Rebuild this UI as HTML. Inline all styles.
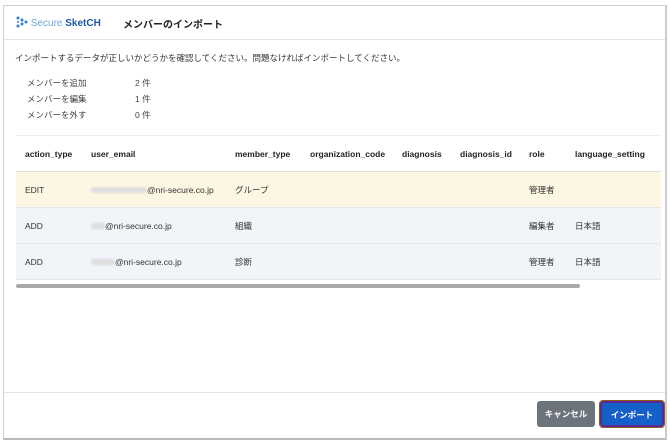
<!DOCTYPE html>
<html><head><meta charset="utf-8"><style>
*{box-sizing:border-box;margin:0;padding:0}
body{width:670px;height:446px;background:#fff;font-family:"Liberation Sans","Noto Sans CJK JP",sans-serif;color:#333;position:relative;overflow:hidden}
.frame{position:absolute;left:3px;top:5px;width:664px;height:435px;border:1px solid #cfcfcf;border-bottom:2px solid #bbb;border-right:2px solid #ccc}
.hdr{position:absolute;left:0;top:0;width:100%;height:34px;border-bottom:1px solid #e2e2e2}
.logo{position:absolute;left:12px;top:10px;font-size:10px;font-weight:bold}
.title{position:absolute;left:119px;top:10px;font-size:10px;font-weight:bold;color:#222}
.msg{position:absolute;left:11px;top:46px;font-size:8.5px;color:#333}
.sum{position:absolute;left:23px;font-size:8.5px;color:#444}
.sum span{position:absolute;left:108px;white-space:nowrap}
table{position:absolute;left:12px;top:129px;width:645px;border-collapse:collapse;font-size:8.5px}
th{text-align:left;height:36px;font-weight:bold;color:#222;border-top:1px solid #eee;border-bottom:1px solid #ddd;padding-left:9px}
td{height:36px;padding-left:9px;border-bottom:1px solid #e3e6ea;color:#333}
tr.y td{background:#fdf6e3}
tr.b td{background:#f1f4f8}
.blur{display:inline-block;height:6px;background:#ddd;border-radius:3px;vertical-align:middle;filter:blur(1px)}
.sb{position:absolute;left:12px;top:278px;width:564px;height:4px;background:#aaa;border-radius:2px}
.ft{position:absolute;left:0;top:386px;width:100%;border-top:1px solid #e2e2e2}
.btn{position:absolute;top:401px;height:26px;font-size:8.5px;font-weight:bold;color:#fff;text-align:center;line-height:24px;border-radius:3px}
</style></head><body>
<div class="frame">
<div class="hdr">
<div class="logo"><svg width="12" height="12" viewBox="0 0 12 12" style="vertical-align:-2px"><g fill="#2f7fd0"><circle cx="2" cy="2" r="1.5"/><circle cx="6" cy="4" r="1.5"/><circle cx="10" cy="6" r="1.5"/><circle cx="6" cy="8" r="1.5"/><circle cx="2" cy="10" r="1.5"/><circle cx="2" cy="6" r="1"/></g></svg> <span style="color:#6aa6df;font-weight:normal">Secure</span> <span style="color:#1d5aa6">SketCH</span></div>
<div class="title">メンバーのインポート</div>
</div>
<div class="msg">インポートするデータが正しいかどうかを確認してください。問題なければインポートしてください。</div>
<div class="sum" style="top:71px">メンバーを追加<span>2 件</span></div>
<div class="sum" style="top:87px">メンバーを編集<span>1 件</span></div>
<div class="sum" style="top:103px">メンバーを外す<span>0 件</span></div>
<table>
<tr><th style="width:66px">action_type</th><th style="width:144px">user_email</th><th style="width:75px">member_type</th><th style="width:92px">organization_code</th><th style="width:58px">diagnosis</th><th style="width:69px">diagnosis_id</th><th style="width:46px">role</th><th>language_setting</th></tr>
<tr class="y"><td>EDIT</td><td><span class="blur" style="width:56px"></span>@nri-secure.co.jp</td><td>グループ</td><td></td><td></td><td></td><td>管理者</td><td></td></tr>
<tr class="b"><td>ADD</td><td><span class="blur" style="width:14px"></span>@nri-secure.co.jp</td><td>組織</td><td></td><td></td><td></td><td>編集者</td><td>日本語</td></tr>
<tr class="b"><td>ADD</td><td><span class="blur" style="width:24px"></span>@nri-secure.co.jp</td><td>診断</td><td></td><td></td><td></td><td>管理者</td><td>日本語</td></tr>
</table>
<div class="sb"></div>
<div class="ft"></div>
</div>
<div class="btn" style="left:537px;width:58px;background:#6c737d;line-height:26px">キャンセル</div>
<div class="btn" style="left:600px;width:64px;background:#1460c8;border:2px solid #5a2a90;outline:1px solid #8a5a20">インポート</div>
</body></html>
